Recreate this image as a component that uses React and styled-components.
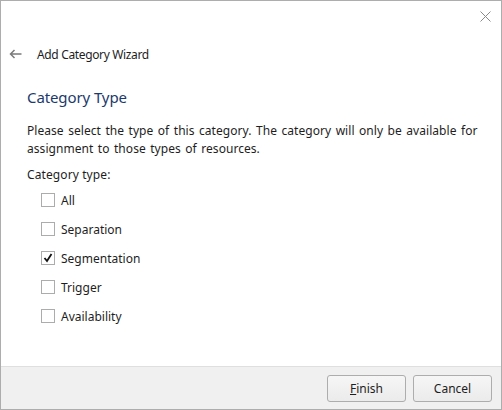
import React from "react";
import styled, { createGlobalStyle } from "styled-components";

const Global = createGlobalStyle`
  html, body { margin: 0; padding: 0; background: #fff; }
  * { box-sizing: border-box; }
  body { font-family: "Noto Sans", "Open Sans", sans-serif; font-size: 12px; color: #1e1e1e; }
`;

const Window = styled.div`
  width: 502px;
  height: 410px;
  border: 1px solid #adadad;
  display: flex;
  flex-direction: column;
  background: #fff;
  position: relative;
`;

const CloseButton = styled.div`
  position: absolute;
  top: 9px;
  right: 10px;
  width: 12px;
  height: 12px;
  display: flex;
  align-items: center;
  justify-content: center;
`;

const Body = styled.div`
  flex: 1;
  display: flex;
  flex-direction: column;
`;

const Header = styled.div`
  display: flex;
  align-items: center;
  height: 18px;
  margin-top: 44px;
  padding-left: 8px;
  gap: 15px;
`;

const HeaderTitle = styled.div`
  font-size: 12px;
  letter-spacing: -0.35px;
  color: #1e1e1e;
`;

const Content = styled.div`
  padding: 0 8px 0 26px;
  display: flex;
  flex-direction: column;
`;

const Heading = styled.div`
  font-size: 15px;
  letter-spacing: -0.1px;
  color: #1c3a6c;
  margin-top: 24px;
  line-height: 20px;
`;

const Paragraph = styled.p`
  margin: 15px 0 0;
  line-height: 18px;
  word-spacing: 1.3px;
  letter-spacing: 0.05px;
  white-space: nowrap;
`;

const Label = styled.div`
  margin-top: 8px;
  line-height: 18px;
  letter-spacing: 0.1px;
`;

const List = styled.div`
  display: flex;
  flex-direction: column;
  gap: 11px;
  margin-top: 7px;
  padding-left: 14px;
`;

const Row = styled.label`
  display: flex;
  align-items: center;
  gap: 6px;
  height: 18px;
`;

const Box = styled.span`
  width: 14px;
  height: 14px;
  border: 1px solid #acacac;
  background: #fff;
  display: flex;
  align-items: center;
  justify-content: center;
`;

const Footer = styled.div`
  height: 43px;
  background: #f0f0f0;
  border-top: 1px solid #dfdfdf;
  display: flex;
  justify-content: flex-end;
  align-items: center;
  gap: 7px;
  padding-right: 9px;
`;

const Button = styled.button`
  width: 79px;
  height: 27px;
  border: 1px solid #adadad;
  border-radius: 3px;
  background: linear-gradient(#f6f6f6, #ebebeb);
  font-family: inherit;
  font-size: 12px;
  color: #1e1e1e;
  padding: 0;
`;

const items = [
  { name: "All", checked: false },
  { name: "Separation", checked: false },
  { name: "Segmentation", checked: true },
  { name: "Trigger", checked: false },
  { name: "Availability", checked: false },
];

export default function App() {
  return (
    <>
      <Global />
      <Window>
        <CloseButton>
          <svg width="11" height="11" viewBox="0 0 11 11">
            <path d="M0.5 0.5 L10.5 10.5 M10.5 0.5 L0.5 10.5" stroke="#8a8a8a" strokeWidth="1" fill="none" />
          </svg>
        </CloseButton>
        <Body>
          <Header>
            <svg width="13" height="10" viewBox="0 0 13 10">
              <path d="M12.5 5 H1.5 M5.5 1 L1.5 5 L5.5 9" stroke="#7a7a7a" strokeWidth="1.5" fill="none" />
            </svg>
            <HeaderTitle>Add Category Wizard</HeaderTitle>
          </Header>
          <Content>
            <Heading>Category Type</Heading>
            <Paragraph>
              Please select the type of this category. The category will only be available for
              <br />
              assignment to those types of resources.
            </Paragraph>
            <Label>Category type:</Label>
            <List>
              {items.map((it) => (
                <Row key={it.name}>
                  <Box>
                    {it.checked && (
                      <svg width="10" height="10" viewBox="0 0 10 10">
                        <path d="M1.5 5 L4 8 L8.5 1" stroke="#111" strokeWidth="1.8" fill="none" />
                      </svg>
                    )}
                  </Box>
                  {it.name}
                </Row>
              ))}
            </List>
          </Content>
        </Body>
        <Footer>
          <Button><u>F</u>inish</Button>
          <Button>Cancel</Button>
        </Footer>
      </Window>
    </>
  );
}
